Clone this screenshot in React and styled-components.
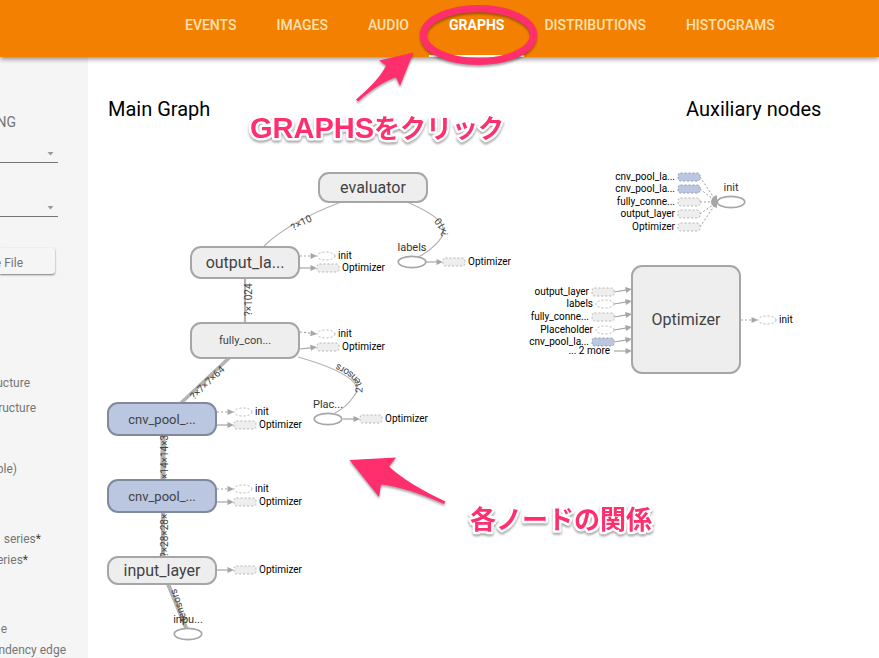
import React from "react";
import styled, { createGlobalStyle } from "styled-components";

const GlobalStyle = createGlobalStyle`
  * { box-sizing: border-box; }
  body { margin: 0; background: #fff; font-family: Roboto, "Noto Sans CJK JP", sans-serif; }
`;

const Page = styled.div`
  position: relative;
  display: flex;
  flex-direction: column;
  min-height: 100vh;
  overflow: hidden;
`;

const TopBar = styled.header`
  display: flex;
  height: 57px;
  padding-left: 165px;
  background: #f38000;
  box-shadow: 0 2px 5px rgba(0, 0, 0, 0.45);
  z-index: 1;
`;

const Tabs = styled.nav`
  display: flex;
`;

const Tab = styled.a`
  padding: 15px 20px 0;
  border-bottom: 2px solid ${(p) => (p.$active ? "#fff" : "transparent")};
  color: ${(p) => (p.$active ? "#fff" : "#ffe0b2")};
  font-size: 14px;
  font-weight: ${(p) => (p.$active ? 700 : 500)};
  line-height: 20px;
  text-decoration: none;
`;

const Body = styled.div`
  display: flex;
  flex: 1;
`;

const Sidebar = styled.aside`
  flex: 0 0 88px;
  display: flex;
  flex-direction: column;
  padding-top: 55px;
  background: #f5f5f5;
  color: #757575;
  font-size: 12px;
  overflow: hidden;
`;

const SideLine = styled.div`
  display: flex;
  justify-content: flex-end;
  width: ${(p) => p.$end}px;
  font-size: ${(p) => (p.$large ? 14 : 12)}px;
  line-height: 21px;
  white-space: nowrap;
`;

const Star = styled.span`
  color: #424242;
`;

const Legend = styled.section`
  display: flex;
  flex-direction: column;
  gap: ${(p) => p.$gap || 0}px;
  margin-top: ${(p) => p.$top}px;
`;

const Field = styled.label`
  display: grid;
  align-items: center;
  width: 58px;
  height: 20px;
  margin-top: ${(p) => p.$top}px;
  border-bottom: 1px solid #757575;
`;

const Select = styled.select`
  grid-area: 1 / 1;
  width: 100%;
  height: 19px;
  border: 0;
  background: transparent;
  appearance: none;
`;

const Caret = styled.svg`
  grid-area: 1 / 1;
  justify-self: end;
  margin: 2px 4px 0 0;
  pointer-events: none;
`;

const FileButton = styled.button`
  display: flex;
  justify-content: flex-end;
  align-items: center;
  width: 55px;
  height: 26px;
  margin-top: 31px;
  padding: 4px 32px 0 0;
  border: 0;
  border-radius: 0 3px 3px 0;
  background: #f5f5f5;
  box-shadow: 0 1px 2px rgba(0, 0, 0, 0.5);
  color: #757575;
  font: 400 12px Roboto, sans-serif;
  white-space: nowrap;
`;

const Main = styled.main`
  flex: 1;
  display: grid;
  grid-template-columns: 1fr 359px;
  min-width: 0;
`;

const Panel = styled.section`
  display: flex;
  flex-direction: column;
  min-width: 0;
  padding-top: 40px;
`;

const PanelTitle = styled.h2`
  margin: 0;
  padding-left: ${(p) => p.$indent}px;
  font-size: 20px;
  font-weight: 400;
  line-height: 24px;
  color: #000;
`;

const Canvas = styled.svg`
  display: block;
  margin-top: 12px;
  overflow: visible;
`;

const Label = styled.text`
  font-family: Roboto, sans-serif;
  font-size: ${(p) => p.$size || 10}px;
  fill: ${(p) => p.$fill || "#000"};
  text-anchor: ${(p) => p.$anchor || "start"};
`;

const Overlay = styled.svg`
  position: absolute;
  inset: 0;
  width: 100%;
  height: 100%;
  z-index: 2;
  pointer-events: none;
  filter: drop-shadow(0 2px 1px rgba(0, 0, 0, 0.35));
`;

const Note = styled.text`
  font-family: "Noto Sans CJK JP", sans-serif;
  font-size: 26px;
  font-weight: 700;
  fill: #ff2f6e;
  stroke: #fff;
  stroke-width: 5px;
  stroke-linejoin: round;
  paint-order: stroke;
`;

const NoteLatin = styled.tspan`
  font-family: "Liberation Sans", sans-serif;
  font-size: 29px;
`;

const TABS = ["EVENTS", "IMAGES", "AUDIO", "GRAPHS", "DISTRIBUTIONS", "HISTOGRAMS"];

const GREY = "#a6a6a6";

function Group({ x, y, w = 108, h, label, size = 16, blue }) {
  return (
    <g>
      <rect x={x} y={y} width={w} height={h} rx={10} fill={blue ? "#bbc6e0" : "#eeeeee"} stroke={blue ? "#808a9c" : GREY} strokeWidth={2} />
      <Label x={x + w / 2} y={y + h / 2 + size * 0.36} $size={size} $anchor="middle" $fill="#424242">{label}</Label>
    </g>
  );
}

function Op({ x, y, label, labelX }) {
  return (
    <g>
      <ellipse cx={x} cy={y} rx={13.8} ry={5.6} fill="#fff" stroke={GREY} strokeWidth={1.6} />
      <Label x={labelX} y={y - 11} $size={11} $anchor="middle" $fill="#333">{label}</Label>
    </g>
  );
}

function Arrow({ x1, y1, x2, y2, dashed }) {
  const a = Math.atan2(y2 - y1, x2 - x1);
  const deg = (a * 180) / Math.PI;
  return (
    <g stroke={GREY} fill={GREY}>
      <line x1={x1} y1={y1} x2={x2 - 5 * Math.cos(a)} y2={y2 - 5 * Math.sin(a)} strokeWidth={1.2} strokeDasharray={dashed ? "2 2" : undefined} />
      <path d="M0 0L-6.500-3V3Z" stroke="none" transform={`translate(${x2} ${y2}) rotate(${deg})`} />
    </g>
  );
}

function Mark({ kind, x, y }) {
  if (kind === "op") {
    return <ellipse cx={x + 9} cy={y} rx={9} ry={4} fill="#fff" stroke="#b5b5b5" strokeDasharray="2 2" />;
  }
  const blue = kind === "blue";
  return <rect x={x} y={y - 4} width={22} height={8} rx={2.500} fill={blue ? "#bbc6e0" : "#eeeeee"} stroke={blue ? "#929cad" : "#b5b5b5"} strokeDasharray="2 2" />;
}

function InitOut({ x, y, from = y }) {
  return (
    <g>
      <Arrow x1={x} y1={from} x2={x + 17} y2={y} dashed />
      <Mark kind="op" x={x + 17} y={y} />
      <Label x={x + 38} y={y + 3}>init</Label>
    </g>
  );
}

function OptimizerOut({ x, y, from = y }) {
  return (
    <g>
      <Arrow x1={x} y1={from} x2={x + 17} y2={y} />
      <Mark kind="group" x={x + 17} y={y} />
      <Label x={x + 42} y={y + 3}>Optimizer</Label>
    </g>
  );
}

const MAIN_EDGES = [
  { id: "e1", d: "M264 246Q289 222 341 202", w: 1.2 },
  { id: "e2", d: "M407 202C442 217 453 229 435 245Q427 253 418 257", w: 1.2 },
  { id: "e3", d: "M245 323V278", w: 2.2 },
  { id: "e4", d: "M181 403L229 358", w: 3.600 },
  { id: "e5", d: "M298 357C344 370 365 384 354 396C348 405 341 410 335 413", w: 1.2 },
  { id: "e6", d: "M163 480V435", w: 5 },
  { id: "e7", d: "M163 557V512", w: 4 },
  { id: "e8", d: "M168 584L187 630", w: 4 },
];

const EDGE_LABELS = [
  { id: "l1", d: "M294 231Q304 223 340 210", text: "?×10" },
  { id: "l2", d: "M448 236Q448 222 426 205", text: "?×10" },
  { id: "l3", d: "M252 316V270", text: "?×1024" },
  { id: "l4", d: "M194 400L240 356", text: "?×7×7×64" },
  { id: "l5", d: "M362 393C366 376 344 364 310 353", text: "2 tensors" },
  { id: "l6", d: "M168 479V430", text: "×14×14×3" },
  { id: "l7", d: "M168 557V507", text: "?×28×28×" },
  { id: "l8", d: "M187 620L172 576", text: "tensors" },
];

function MainGraph() {
  return (
    <Canvas width="431" height="524" viewBox="88 133 431 524" role="img" aria-label="Main graph">
      {MAIN_EDGES.map((e) => (
        <path key={e.id} d={e.d} fill="none" stroke="#b3b3b3" strokeWidth={e.w} />
      ))}
      <defs>
        {EDGE_LABELS.map((l) => (
          <path key={l.id} id={l.id} d={l.d} />
        ))}
      </defs>
      {EDGE_LABELS.map((l) => (
        <Label key={l.id} $fill="#444">
          <textPath href={`#${l.id}`}>{l.text}</textPath>
        </Label>
      ))}

      <Group x={319} y={173} h={29} label="evaluator" />
      <Group x={191} y={247} h={31} label="output_la..." />
      <Group x={191} y={323} h={35} label="fully_con..." size={11} />
      <Group x={108} y={403} h={32} label="cnv_pool_..." size={13} blue />
      <Group x={108} y={480} h={32} label="cnv_pool_..." size={13} blue />
      <Group x={108} y={557} h={27} label="input_layer" />

      <Op x={412} y={262} label="labels" labelX={412} />
      <Op x={328} y={419} label="Plac..." labelX={328} />
      <Op x={188} y={634} label="inpu..." labelX={188} />

      <InitOut x={300} y={256} />
      <OptimizerOut x={300} y={268} />
      <InitOut x={300} y={334} from={332} />
      <OptimizerOut x={300} y={347} from={349} />
      <InitOut x={217} y={412} />
      <OptimizerOut x={217} y={425} />
      <InitOut x={217} y={489} />
      <OptimizerOut x={217} y={502} />
      <OptimizerOut x={217} y={570} />
      <OptimizerOut x={426} y={262} />
      <OptimizerOut x={343} y={419} />
    </Canvas>
  );
}

const INIT_INPUTS = [
  { label: "cnv_pool_la...", y: 177, kind: "blue" },
  { label: "cnv_pool_la...", y: 189, kind: "blue" },
  { label: "fully_conne...", y: 202, kind: "group" },
  { label: "output_layer", y: 214, kind: "group" },
  { label: "Optimizer", y: 227, kind: "group" },
];

const OPTIMIZER_INPUTS = [
  { label: "output_layer", y: 292, kind: "group" },
  { label: "labels", y: 304, kind: "op" },
  { label: "fully_conne...", y: 317, kind: "group" },
  { label: "Placeholder", y: 330, kind: "op" },
  { label: "cnv_pool_la...", y: 342, kind: "blue" },
];

function AuxiliaryGraph() {
  return (
    <Canvas width="359" height="524" viewBox="520 133 359 524" role="img" aria-label="Auxiliary nodes">
      {INIT_INPUTS.map((n) => (
        <g key={n.y}>
          <path d={`M700 ${n.y}L714 ${202 + (n.y - 202) / 6}`} stroke="#999" strokeDasharray="2 2" />
          <Mark kind={n.kind} x={678} y={n.y} />
          <Label x={675} y={n.y + 3} $anchor="end">{n.label}</Label>
        </g>
      ))}
      <path d="M717 195Q711 197 711 202Q711 206 717 208Z" fill={GREY} />
      <Op x={731} y={202} label="init" labelX={731} />

      {OPTIMIZER_INPUTS.map((n) => (
        <g key={n.y}>
          <Arrow x1={614} y1={n.y} x2={632} y2={n.y - 3} />
          <Mark kind={n.kind} x={n.kind === "op" ? 596 : 592} y={n.y} />
          <Label x={n.kind === "op" ? 593 : 589} y={n.y + 3} $anchor="end">{n.label}</Label>
        </g>
      ))}
      <Label x={610} y={354} $anchor="end">... 2 more</Label>
      <Arrow x1={614} y1={351} x2={632} y2={351} />
      <Group x={632} y={266} h={107} label="Optimizer" />
      <InitOut x={741} y={320} />
    </Canvas>
  );
}

function DropDown({ label, top }) {
  return (
    <Field $top={top}>
      <Select aria-label={label} />
      <Caret width="7" height="4" viewBox="0 0 7 4" aria-hidden="true">
        <path d="M0.500 0H6.500L3.500 3.500Z" fill="#9a9a9a" />
      </Caret>
    </Field>
  );
}

export default function App() {
  return (
    <Page>
      <GlobalStyle />
      <TopBar>
        <Tabs>
          {TABS.map((t) => (
            <Tab key={t} href={`#${t.toLowerCase()}`} $active={t === "GRAPHS"}>{t}</Tab>
          ))}
        </Tabs>
      </TopBar>
      <Body>
        <Sidebar>
          <SideLine $end={16} $large>NG</SideLine>
          <DropDown label="Run" top={10} />
          <DropDown label="Session" top={34} />
          <FileButton type="button">e File</FileButton>
          <Legend $top={99} $gap={4}>
            <SideLine $end={30}>ucture</SideLine>
            <SideLine $end={36}>ructure</SideLine>
          </Legend>
          <Legend $top={40}>
            <SideLine $end={17}>ble)</SideLine>
          </Legend>
          <Legend $top={49}>
            <SideLine $end={41}>series<Star>*</Star></SideLine>
            <SideLine $end={28}>eries<Star>*</Star></SideLine>
          </Legend>
          <Legend $top={48}>
            <SideLine $end={7}>e</SideLine>
            <SideLine $end={66}>ndency edge</SideLine>
          </Legend>
        </Sidebar>
        <Main>
          <Panel>
            <PanelTitle $indent={20}>Main Graph</PanelTitle>
            <MainGraph />
          </Panel>
          <Panel>
            <PanelTitle $indent={166}>Auxiliary nodes</PanelTitle>
            <AuxiliaryGraph />
          </Panel>
        </Main>
      </Body>
      <Overlay>
        <ellipse cx="478.500" cy="35" rx="55" ry="26.500" fill="none" stroke="#ff2f6e" strokeWidth="7" />
        <path d="M413.500 52.500L379 60.500L386 65.500Q380 79 356 99.500L358 101.500Q380 82 396 77.500L400 86Z" fill="#ff2f6e" />
        <path d="M349.500 460L396 457.500L389 466.500Q408 484 445.500 501.500L444 504Q406 487 381 484.500L379 497Z" fill="#ff2f6e" />
        <Note x="250" y="138"><NoteLatin>GRAPHS</NoteLatin>をクリック</Note>
        <Note x="470" y="529">各ノードの関係</Note>
      </Overlay>
    </Page>
  );
}
